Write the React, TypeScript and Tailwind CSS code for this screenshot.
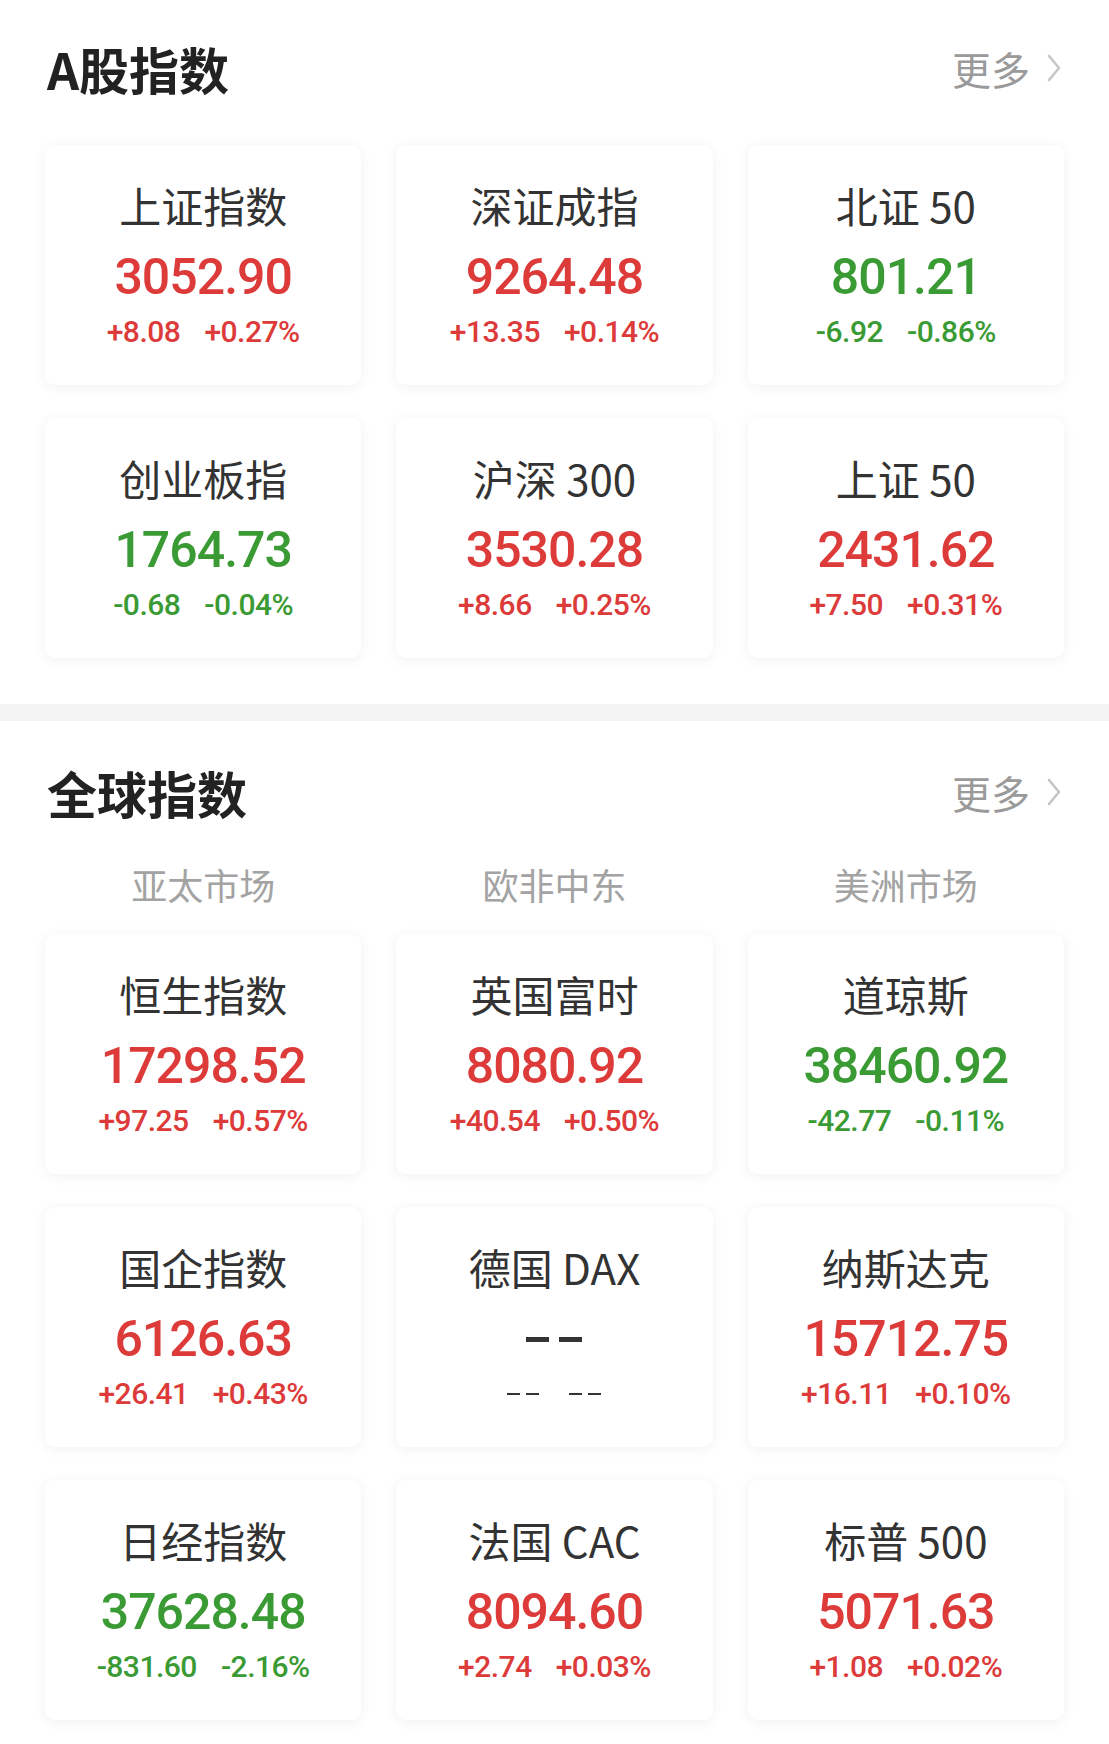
import React from "react";

type Item = { name: string; value: string; chg: string; pct: string; dir: "up" | "down" | "none" };

const aShares: Item[] = [
  { name: "上证指数", value: "3052.90", chg: "+8.08", pct: "+0.27%", dir: "up" },
  { name: "深证成指", value: "9264.48", chg: "+13.35", pct: "+0.14%", dir: "up" },
  { name: "北证 50", value: "801.21", chg: "-6.92", pct: "-0.86%", dir: "down" },
  { name: "创业板指", value: "1764.73", chg: "-0.68", pct: "-0.04%", dir: "down" },
  { name: "沪深 300", value: "3530.28", chg: "+8.66", pct: "+0.25%", dir: "up" },
  { name: "上证 50", value: "2431.62", chg: "+7.50", pct: "+0.31%", dir: "up" },
];

const globalIdx: Item[] = [
  { name: "恒生指数", value: "17298.52", chg: "+97.25", pct: "+0.57%", dir: "up" },
  { name: "英国富时", value: "8080.92", chg: "+40.54", pct: "+0.50%", dir: "up" },
  { name: "道琼斯", value: "38460.92", chg: "-42.77", pct: "-0.11%", dir: "down" },
  { name: "国企指数", value: "6126.63", chg: "+26.41", pct: "+0.43%", dir: "up" },
  { name: "德国 DAX", value: "--", chg: "--", pct: "--", dir: "none" },
  { name: "纳斯达克", value: "15712.75", chg: "+16.11", pct: "+0.10%", dir: "up" },
  { name: "日经指数", value: "37628.48", chg: "-831.60", pct: "-2.16%", dir: "down" },
  { name: "法国 CAC", value: "8094.60", chg: "+2.74", pct: "+0.03%", dir: "up" },
  { name: "标普 500", value: "5071.63", chg: "+1.08", pct: "+0.02%", dir: "up" },
];

const cjk = "font-['Noto_Sans_CJK_SC','Noto_Sans',sans-serif]";
const num = "font-['Roboto','Liberation_Sans',sans-serif]";

function colorOf(dir: Item["dir"]) {
  if (dir === "up") return "text-[#dd3a3a]";
  if (dir === "down") return "text-[#3a9a33]";
  return "text-[#333333]";
}

function Header({ title }: { title: string }) {
  return (
    <div className="flex items-center justify-between h-[56px] pl-[47px] pr-[47px]">
      <div className={`${cjk} text-[50px] leading-[56px] font-bold text-[#222222]`}>{title}</div>
      <div className="flex items-center gap-[16px]">
        <span className={`${cjk} text-[39px] leading-[56px] text-[#9a9a9a]`}>更多</span>
        <svg width="16" height="30" viewBox="0 0 16 30" fill="none">
          <polyline points="3,3 13,15 3,27" stroke="#c6c6c6" strokeWidth="2.6" strokeLinecap="round" strokeLinejoin="round" />
        </svg>
      </div>
    </div>
  );
}

function Card({ item }: { item: Item }) {
  const c = colorOf(item.dir);
  return (
    <div className="h-[240px] bg-white rounded-[10px] shadow-[0_2px_14px_rgba(0,0,0,0.06)] flex flex-col items-center pt-[35px]">
      <div className={`${cjk} text-[42px] leading-[50px] text-[#333333]`}>{item.name}</div>
      {item.dir === "none" ? (
        <div className="mt-[17px] h-[60px] flex items-center gap-[10px]">
          <span className="block w-[23px] h-[5px] bg-[#333333]" />
          <span className="block w-[23px] h-[5px] bg-[#333333]" />
        </div>
      ) : (
        <div className={`${num} ${c} mt-[17px] text-[50px] leading-[60px] font-medium tracking-[-1px]`}>{item.value}</div>
      )}
      {item.dir === "none" ? (
        <div className="mt-[7px] h-[36px] flex items-center gap-[30px]">
          <div className="flex gap-[6px]">
            <span className="block w-[13px] h-[2.5px] bg-[#333333]" />
            <span className="block w-[13px] h-[2.5px] bg-[#333333]" />
          </div>
          <div className="flex gap-[6px]">
            <span className="block w-[13px] h-[2.5px] bg-[#333333]" />
            <span className="block w-[13px] h-[2.5px] bg-[#333333]" />
          </div>
        </div>
      ) : (
        <div className={`${num} ${c} mt-[7px] text-[30px] leading-[36px] font-medium tracking-[-0.5px] flex gap-[24px]`}>
          <span>{item.chg}</span>
          <span>{item.pct}</span>
        </div>
      )}
    </div>
  );
}

export default function App() {
  return (
    <div className="w-[1109px] min-h-[1744px] bg-white">
      <section className="pt-[40px] pb-[46px]">
        <Header title="A股指数" />
        <div className="mt-[49px] px-[45px] grid grid-cols-3 gap-x-[35px] gap-y-[33px]">
          {aShares.map((it) => (
            <Card key={it.name} item={it} />
          ))}
        </div>
      </section>
      <div className="h-[17px] bg-[#f3f3f3]" />
      <section className="pt-[43px] pb-[25px]">
        <Header title="全球指数" />
        <div className="mt-[42px] px-[45px] grid grid-cols-3 gap-x-[35px]">
          {["亚太市场", "欧非中东", "美洲市场"].map((t) => (
            <div key={t} className={`${cjk} text-center text-[36px] leading-[44px] text-[#a3a3a3]`}>{t}</div>
          ))}
        </div>
        <div className="mt-[28px] px-[45px] grid grid-cols-3 gap-x-[35px] gap-y-[33px]">
          {globalIdx.map((it) => (
            <Card key={it.name} item={it} />
          ))}
        </div>
      </section>
    </div>
  );
}
